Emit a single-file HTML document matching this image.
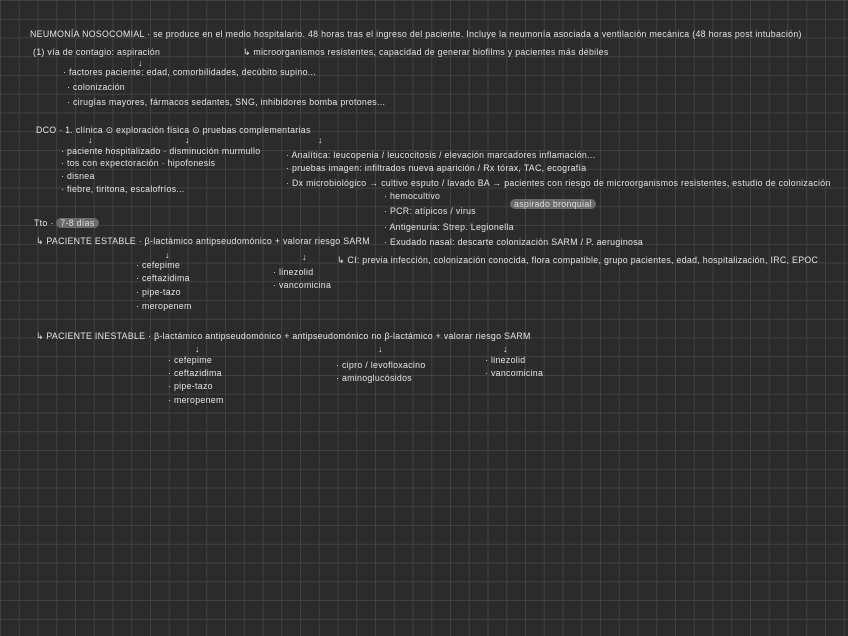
<!DOCTYPE html>
<html><head><meta charset="utf-8"><style>
html,body{margin:0;padding:0}
body{width:848px;height:636px;overflow:hidden;background-color:#2b2b2b;
background-image:linear-gradient(#414141 1px,transparent 1px),linear-gradient(90deg,#414141 1px,transparent 1px);
background-size:18.75px 18.75px;background-position:0 0;position:relative;
font-family:"Liberation Sans",sans-serif;color:#e4e4e4;font-size:8.8px;letter-spacing:0.3px}
.t{position:absolute;white-space:nowrap}
.hl{background:#6a6a6a;border-radius:5px;padding:0 4px;color:#ddd}
</style></head><body>
<div class="t" style="left:30px;top:29px">NEUMONÍA NOSOCOMIAL · se produce en el medio hospitalario. 48 horas tras el ingreso del paciente. Incluye la neumonía asociada a ventilación mecánica (48 horas post intubación)</div>
<div class="t" style="left:33px;top:47px">(1) vía de contagio: aspiración</div>
<div class="t" style="left:243px;top:47px">↳ microorganismos resistentes, capacidad de generar biofilms y pacientes más débiles</div>
<div class="t" style="left:138px;top:58px">↓</div>
<div class="t" style="left:63px;top:67px">· factores paciente: edad, comorbilidades, decúbito supino...</div>
<div class="t" style="left:67px;top:82px">· colonización</div>
<div class="t" style="left:67px;top:97px">· cirugías mayores, fármacos sedantes, SNG, inhibidores bomba protones...</div>
<div class="t" style="left:36px;top:125px">DCO · 1. clínica ⊙ exploración física ⊙ pruebas complementarias</div>
<div class="t" style="left:88px;top:135px">↓</div><div class="t" style="left:185px;top:135px">↓</div><div class="t" style="left:318px;top:135px">↓</div>
<div class="t" style="left:61px;top:146px">· paciente hospitalizado · disminución murmullo</div>
<div class="t" style="left:61px;top:158px">· tos con expectoración · hipofonesis</div>
<div class="t" style="left:61px;top:171px">· disnea</div>
<div class="t" style="left:61px;top:184px">· fiebre, tiritona, escalofríos...</div>
<div class="t" style="left:286px;top:150px">· Analítica: leucopenia / leucocitosis / elevación marcadores inflamación...</div>
<div class="t" style="left:286px;top:163px">· pruebas imagen: infiltrados nueva aparición / Rx tórax, TAC, ecografía</div>
<div class="t" style="left:286px;top:178px">· Dx microbiológico → cultivo esputo / lavado BA → pacientes con riesgo de microorganismos resistentes, estudio de colonización</div>
<div class="t" style="left:384px;top:191px">· hemocultivo</div>
<div class="t" style="left:510px;top:199px"><span class="hl">aspirado bronquial</span></div>
<div class="t" style="left:384px;top:206px">· PCR: atípicos / virus</div>
<div class="t" style="left:384px;top:222px">· Antigenuria: Strep. Legionella</div>
<div class="t" style="left:384px;top:237px">· Exudado nasal: descarte colonización SARM / P. aeruginosa</div>
<div class="t" style="left:34px;top:218px">Tto · <span class="hl">7-8 días</span></div>
<div class="t" style="left:36px;top:236px">↳ PACIENTE ESTABLE · β-lactámico antipseudomónico + valorar riesgo SARM</div>
<div class="t" style="left:165px;top:250px">↓</div><div class="t" style="left:302px;top:252px">↓</div>
<div class="t" style="left:337px;top:255px">↳ CI: previa infección, colonización conocida, flora compatible, grupo pacientes, edad, hospitalización, IRC, EPOC</div>
<div class="t" style="left:136px;top:260px">· cefepime</div>
<div class="t" style="left:136px;top:273px">· ceftazidima</div>
<div class="t" style="left:136px;top:287px">· pipe-tazo</div>
<div class="t" style="left:136px;top:301px">· meropenem</div>
<div class="t" style="left:273px;top:267px">· linezolid</div>
<div class="t" style="left:273px;top:280px">· vancomicina</div>
<div class="t" style="left:36px;top:331px">↳ PACIENTE INESTABLE · β-lactámico antipseudomónico + antipseudomónico no β-lactámico + valorar riesgo SARM</div>
<div class="t" style="left:195px;top:344px">↓</div><div class="t" style="left:378px;top:344px">↓</div><div class="t" style="left:503px;top:344px">↓</div>
<div class="t" style="left:168px;top:355px">· cefepime</div>
<div class="t" style="left:168px;top:368px">· ceftazidima</div>
<div class="t" style="left:168px;top:381px">· pipe-tazo</div>
<div class="t" style="left:168px;top:395px">· meropenem</div>
<div class="t" style="left:336px;top:360px">· cipro / levofloxacino</div>
<div class="t" style="left:336px;top:373px">· aminoglucósidos</div>
<div class="t" style="left:485px;top:355px">· linezolid</div>
<div class="t" style="left:485px;top:368px">· vancomicina</div>
</body></html>
